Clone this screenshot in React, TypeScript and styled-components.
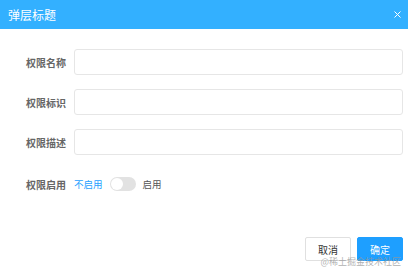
import styled, { createGlobalStyle } from 'styled-components';

const GlobalStyle = createGlobalStyle`
  html, body {
    margin: 0;
    padding: 0;
    background: #fff;
    font-family: "Noto Sans CJK SC", "Liberation Sans", sans-serif;
  }
`;

const ScDialog = styled.div`
  position: relative;
  width: 408px;
  height: 270px;
  display: flex;
  flex-direction: column;
  background: #fff;
`;

const ScHeader = styled.div`
  height: 29px;
  display: flex;
  align-items: center;
  justify-content: space-between;
  padding: 0 7px 0 8px;
  background-color: #33b0ff;
  color: #fff;
  font-size: 12px;
`;

const ScClose = styled.svg`
  width: 7px;
  height: 7px;
`;

const ScForm = styled.div`
  display: flex;
  flex-direction: column;
  gap: 14px;
  padding: 20px 5px 0 0;
`;

const ScRow = styled.div`
  display: flex;
  align-items: center;
  gap: 8px;
  height: 26px;
`;

const ScLabel = styled.label`
  width: 66px;
  flex-shrink: 0;
  text-align: right;
  font-size: 10px;
  font-weight: 700;
  color: #666;
`;

const ScInput = styled.input`
  flex: 1;
  height: 26px;
  box-sizing: border-box;
  border: 1px solid #e6e6e6;
  border-radius: 3px;
  outline: none;
  background: #fff;
`;

const ScSwitchRow = styled(ScRow)`
  margin-top: 2px;
  gap: 0;
  > ${ScLabel} {
    margin-right: 8px;
  }
`;

const ScOption = styled.span<{ active?: boolean }>`
  font-size: 9.5px;
  color: ${p => (p.active ? '#1e9fff' : '#555')};
`;

const ScTrack = styled.span`
  display: flex;
  align-items: center;
  width: 26px;
  height: 14px;
  margin: 0 7px;
  padding: 1px;
  box-sizing: border-box;
  border-radius: 7px;
  background: #e2e2e2;
`;

const ScKnob = styled.span`
  width: 12px;
  height: 12px;
  border-radius: 50%;
  background: #fff;
`;

const ScFooter = styled.div`
  margin-top: auto;
  display: flex;
  justify-content: flex-end;
  gap: 6px;
  padding: 0 5px 9px 0;
`;

const ScButton = styled.button<{ primary?: boolean }>`
  width: 46px;
  height: 24px;
  padding: 0;
  border-radius: 2px;
  font-family: inherit;
  font-size: 10px;
  border: 1px solid ${p => (p.primary ? '#1e9fff' : '#e0e0e0')};
  background: ${p => (p.primary ? '#1e9fff' : '#fff')};
  color: ${p => (p.primary ? '#fff' : '#333')};
`;

const ScWatermark = styled.span`
  position: absolute;
  right: 7px;
  bottom: 2px;
  font-size: 9px;
  color: rgba(150, 150, 150, 0.75);
  pointer-events: none;
`;

const fields = ['权限名称', '权限标识', '权限描述'];

function App() {
  return (
    <>
      <GlobalStyle />
      <ScDialog>
        <ScHeader>
          <span>弹层标题</span>
          <ScClose viewBox="0 0 7 7">
            <path d="M0.5 0.5L6.5 6.5M6.5 0.5L0.5 6.5" stroke="#fff" strokeWidth="1" />
          </ScClose>
        </ScHeader>
        <ScForm>
          {fields.map(f => (
            <ScRow key={f}>
              <ScLabel>{f}</ScLabel>
              <ScInput />
            </ScRow>
          ))}
          <ScSwitchRow>
            <ScLabel>权限启用</ScLabel>
            <ScOption active>不启用</ScOption>
            <ScTrack>
              <ScKnob />
            </ScTrack>
            <ScOption>启用</ScOption>
          </ScSwitchRow>
        </ScForm>
        <ScFooter>
          <ScButton>取消</ScButton>
          <ScButton primary>确定</ScButton>
        </ScFooter>
        <ScWatermark>@稀土掘金技术社区</ScWatermark>
      </ScDialog>
    </>
  );
}

export default App;
